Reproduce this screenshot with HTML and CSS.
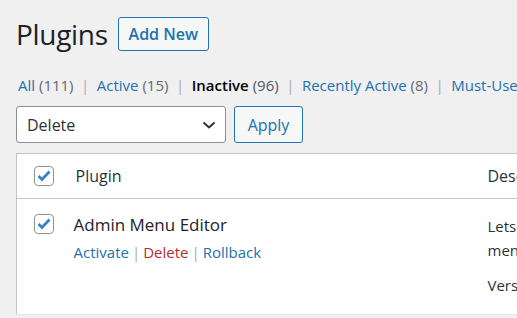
FILE: index.html
```html
<!DOCTYPE html>
<html>
	<head>
		<meta charset="utf-8">
		<title>Plugins</title>
		<link rel="stylesheet" href="styles.css">
	</head>
	<body>
		<div class="wrap">
			<div class="head">
				<h1>Plugins</h1>
				<a class="btnAdd" href="#">Add New</a>
			</div>
			<ul class="filters">
				<li><a href="#">All <span class="count">(111)</span></a><span class="sep">|</span></li>
				<li><a href="#">Active <span class="count">(15)</span></a><span class="sep">|</span></li>
				<li><a class="current" href="#">Inactive <span class="count">(96)</span></a><span class="sep">|</span></li>
				<li><a href="#">Recently Active <span class="count">(8)</span></a><span class="sep">|</span></li>
				<li><a href="#">Must-Use <span class="count">(2)</span></a></li>
			</ul>
			<div class="bulk">
				<div class="select">
					<span>Delete</span>
					<svg width="14" height="8" viewBox="0 0 14 8"><path d="M1.5 1.5 L7 6.5 L12.5 1.5" fill="none" stroke="#2c3338" stroke-width="2"/></svg>
				</div>
				<a class="btnApply" href="#">Apply</a>
			</div>
			<table class="plugins">
				<thead>
					<tr>
						<th class="cb"><span class="check"><svg width="14" height="12" viewBox="0 0 14 12"><path d="M1.5 6 L5 9.5 L12.5 1.5" fill="none" stroke="#3582c4" stroke-width="2.8"/></svg></span></th>
						<th class="name">Plugin</th>
						<th class="desc">Description</th>
					</tr>
				</thead>
				<tbody>
					<tr>
						<td class="cb"><span class="check"><svg width="14" height="12" viewBox="0 0 14 12"><path d="M1.5 6 L5 9.5 L12.5 1.5" fill="none" stroke="#3582c4" stroke-width="2.8"/></svg></span></td>
						<td class="name">
							<strong>Admin Menu Editor</strong>
							<div class="actions">
								<a href="#">Activate</a><span class="sep">|</span><a class="del" href="#">Delete</a><span class="sep">|</span><a href="#">Rollback</a>
							</div>
						</td>
						<td class="desc">
							<p>Lets you directly edit the WordPress admin<br>menu. You can re-order, hide or rename menus.</p>
							<p class="ver">Version 1.11.2 | By Janis Elsts | View details</p>
						</td>
					</tr>
				</tbody>
			</table>
		</div>
	</body>
</html>
```

FILE: styles.css
```css
* {
	margin: 0;
	padding: 0;
	box-sizing: border-box;
}

ul,
li {
	list-style: none;
}

a {
	text-decoration: none;
}

html,
body {
	height: 100%;
	overflow: hidden;
}

body {
	background-color: #f0f0f1;
	font-family: "Open Sans", "Noto Sans", sans-serif;
	color: #2c3338;
}

.wrap {
	padding: 17px 0 0 16px;
}

.head {
	display: flex;
	align-items: center;
	height: 34px;
}

.head h1 {
	font-size: 28px;
	font-weight: 400;
	line-height: 34px;
	color: #1d2327;
	letter-spacing: -0.3px;
}

.btnAdd {
	display: flex;
	align-items: center;
	justify-content: center;
	width: 91px;
	height: 34px;
	margin-left: 10px;
	border: 1px solid #2271b1;
	border-radius: 3px;
	background-color: #f6f7f7;
	color: #2271b1;
	font-size: 16px;
	font-weight: 600;
}

.filters {
	display: flex;
	margin-top: 25px;
	font-size: 15px;
	line-height: 18px;
	white-space: nowrap;
	padding-left: 2px;
}

.filters a {
	color: #2271b1;
}

.filters .count {
	color: #646970;
}

.filters a.current {
	color: #000;
	font-weight: 600;
}

.filters a.current .count {
	font-weight: 400;
	color: #50575e;
}

.filters .sep {
	margin: 0 7.5px;
	color: #a7aaad;
}

.bulk {
	display: flex;
	margin-top: 12px;
	height: 37px;
}

.select {
	display: flex;
	align-items: center;
	justify-content: space-between;
	width: 210px;
	height: 37px;
	padding: 0 9px 0 10px;
	border: 1px solid #8c8f94;
	border-radius: 3px;
	background-color: #fff;
	font-size: 16px;
	color: #2c3338;
}

.btnApply {
	display: flex;
	align-items: center;
	justify-content: center;
	width: 69px;
	height: 37px;
	margin-left: 8px;
	border: 1px solid #2271b1;
	border-radius: 3px;
	background-color: #f6f7f7;
	color: #2271b1;
	font-size: 16px;
}

.plugins {
	width: 760px;
	margin-top: 10px;
	border-collapse: collapse;
	table-layout: fixed;
	background-color: #fff;
	border: 1px solid #c3c4c7;
}

.plugins th,
.plugins td {
	text-align: left;
	vertical-align: top;
}

.plugins th {
	height: 45px;
	vertical-align: middle;
	border-bottom: 1px solid #c3c4c7;
	font-size: 16px;
	font-weight: 400;
	color: #2c3338;
}

.plugins td {
	height: 116px;
	border-bottom: 1px solid #e6e6e8;
}

.plugins .cb {
	width: 51px;
	padding-left: 17px;
}

.plugins td.cb {
	padding-top: 15px;
}

.plugins .name {
	width: 410px;
	padding-left: 8px;
}

.plugins th.desc {
	padding-left: 10px;
}

.check {
	display: flex;
	align-items: center;
	justify-content: center;
	width: 20px;
	height: 20px;
	border: 1px solid #8c8f94;
	border-radius: 4px;
	background-color: #fff;
}

.plugins td.name {
	padding-top: 14px;
	padding-left: 6px;
}

.plugins td.name strong {
	display: block;
	font-size: 17px;
	font-weight: 400;
	line-height: 24px;
	color: #1d2327;
}

.actions {
	margin-top: 4px;
	font-size: 15px;
	line-height: 22px;
	white-space: nowrap;
}

.actions a {
	color: #2271b1;
}

.actions a.del {
	color: #b32d2e;
}

.actions .sep {
	margin: 0 3px;
	color: #a7aaad;
}

.plugins td.desc {
	padding: 15px 0 0 10px;
	font-size: 15px;
	line-height: 24px;
	color: #2c3338;
	white-space: nowrap;
}

.plugins td.desc .ver {
	margin-top: 11px;
}
```
